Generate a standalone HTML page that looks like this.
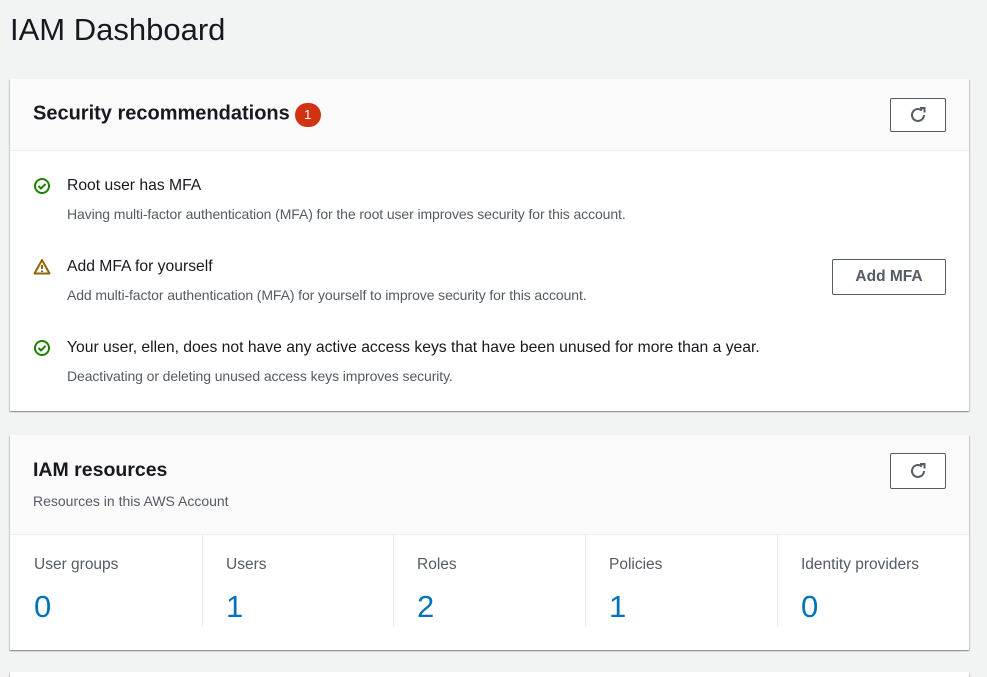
<!DOCTYPE html>
<html><head><style>
html,body{margin:0;height:677px;overflow:hidden}
body{background:#f2f3f3;font-family:"Liberation Sans",Arial,sans-serif;color:#16191f;width:987px;position:relative}
h1{position:absolute;left:10px;top:12px;margin:0;font-size:31px;font-weight:400;color:#16191f}
.card{position:absolute;left:10px;width:959px;background:#fff;box-shadow:0 1px 1px rgba(0,28,36,.3),1px 1px 1px rgba(0,28,36,.15),-1px 1px 1px rgba(0,28,36,.15)}
.hdr{background:#fafafa;border-bottom:1px solid #eaeded;position:relative}
.title{position:absolute;left:23px;font-size:20px;font-weight:700;white-space:nowrap}
.btn{position:absolute;border:1px solid #545b64;border-radius:2px;background:#fff;box-sizing:border-box;display:flex;align-items:center;justify-content:center;font-weight:700;color:#545b64;font-size:15.5px}
.badge{display:inline-block;width:26px;height:24px;border-radius:12px;background:#d13212;color:#fff;font-size:13px;text-align:center;line-height:24px;font-weight:400;vertical-align:middle;margin-left:5px;position:relative;top:1px}
.item{position:absolute;left:23px}
.item .t{position:absolute;left:34px;top:0px;font-size:15.7px;white-space:nowrap}
.item .d{position:absolute;left:34px;top:29px;font-size:14px;letter-spacing:-0.1px;color:#545b64;white-space:nowrap}
.item svg{position:absolute;left:0;top:0}
.col{position:absolute;top:535px;height:92px;border-left:1px solid #eaeded}
.col .l{position:absolute;left:0;top:21px;font-size:15.5px;color:#545b64;white-space:nowrap}
.col .n{position:absolute;left:0;top:54px;font-size:31px;color:#0073bb}
</style></head><body>
<h1>IAM Dashboard</h1>
<div class="card" style="top:79px;height:332px">
 <div class="hdr" style="height:71px">
  <div class="title" style="top:23px">Security recommendations<span class="badge">1</span></div>
  <div class="btn" style="left:880px;top:19px;width:56px;height:34px"><svg width="18" height="18" viewBox="0 0 18 18"><path d="M15 9a6 6 0 1 1-2-4.5" fill="none" stroke="#545b64" stroke-width="2"/><path d="M11 2h4.5v4.5" fill="none" stroke="#545b64" stroke-width="2"/></svg></div>
 </div>
 <div class="item" style="top:98px"><svg width="18" height="18"><circle cx="9" cy="9" r="7" fill="none" stroke="#1d8102" stroke-width="2"/><path d="M5.5 9l2.5 2.5 4.5-4.5" fill="none" stroke="#1d8102" stroke-width="2"/></svg><div class="t">Root user has MFA</div><div class="d">Having multi-factor authentication (MFA) for the root user improves security for this account.</div></div>
 <div class="item" style="top:179px"><svg width="18" height="18"><path d="M9 2L1.5 15.5h15z" fill="none" stroke="#8d6605" stroke-width="2" stroke-linejoin="round"/><path d="M9 7v4M9 12.5v1.5" stroke="#8d6605" stroke-width="2"/></svg><div class="t">Add MFA for yourself</div><div class="d">Add multi-factor authentication (MFA) for yourself to improve security for this account.</div></div>
 <div class="btn" style="left:822px;top:180px;width:114px;height:36px">Add MFA</div>
 <div class="item" style="top:260px"><svg width="18" height="18"><circle cx="9" cy="9" r="7" fill="none" stroke="#1d8102" stroke-width="2"/><path d="M5.5 9l2.5 2.5 4.5-4.5" fill="none" stroke="#1d8102" stroke-width="2"/></svg><div class="t">Your user, ellen, does not have any active access keys that have been unused for more than a year.</div><div class="d">Deactivating or deleting unused access keys improves security.</div></div>
</div>
<div class="card" style="top:435px;height:215px">
 <div class="hdr" style="height:99px">
  <div class="title" style="top:24px;font-size:19.5px">IAM resources</div>
  <div style="position:absolute;left:23px;top:58px;font-size:14px;color:#545b64">Resources in this AWS Account</div>
  <div class="btn" style="left:880px;top:18px;width:56px;height:36px"><svg width="18" height="18" viewBox="0 0 18 18"><path d="M15 9a6 6 0 1 1-2-4.5" fill="none" stroke="#545b64" stroke-width="2"/><path d="M11 2h4.5v4.5" fill="none" stroke="#545b64" stroke-width="2"/></svg></div>
 </div>
</div>
<div class="col" style="left:34px;border:none"><div class="l">User groups</div><div class="n">0</div></div>
<div class="col" style="left:202px"><div class="l" style="left:23px">Users</div><div class="n" style="left:23px">1</div></div>
<div class="col" style="left:393px"><div class="l" style="left:23px">Roles</div><div class="n" style="left:23px">2</div></div>
<div class="col" style="left:585px"><div class="l" style="left:23px">Policies</div><div class="n" style="left:23px">1</div></div>
<div class="col" style="left:777px"><div class="l" style="left:23px">Identity providers</div><div class="n" style="left:23px">0</div></div>
<div class="card" style="top:672px;height:20px"></div>
</body></html>
